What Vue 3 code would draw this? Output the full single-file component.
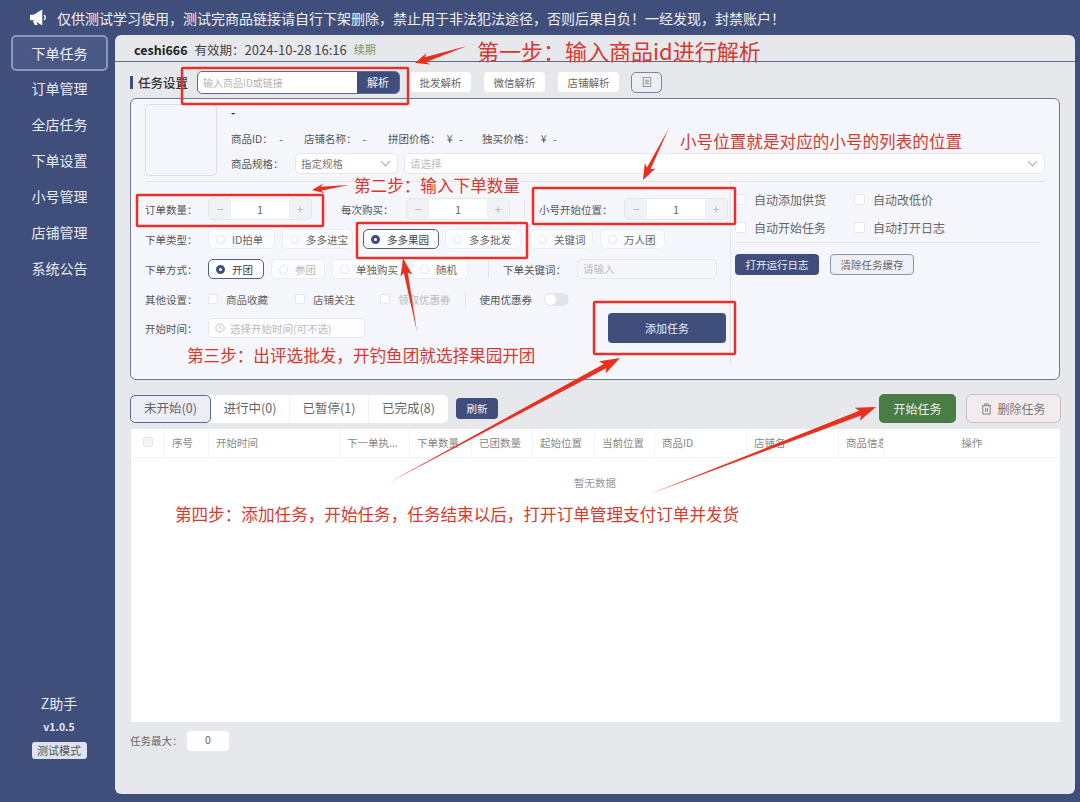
<template>
  <div class="app">
    <div class="banner">
      <svg class="horn" viewBox="0 0 20 18" width="19" height="17">
        <path d="M1 6h4l9-5.500v17l-9-5.500H1z" fill="#fff" />
        <path d="M4 12.500h3.500l1.500 4.500H6z" fill="#fff" />
        <path d="M16 6.500c1.500 1 1.500 4 0 5" fill="none" stroke="#fff" stroke-width="1.500" />
      </svg>
      <span>仅供测试学习使用，测试完商品链接请自行下架删除，禁止用于非法犯法途径，否则后果自负！一经发现，封禁账户！</span>
    </div>

    <div class="body">
      <aside class="sidebar">
        <nav class="menu">
          <div v-for="(item, i) in menu" :key="item" class="menu-item" :class="{ active: i === 0 }">{{ item }}</div>
        </nav>
        <div class="side-foot">
          <div class="app-name">Z助手</div>
          <div class="version">v1.0.5</div>
          <div class="mode">测试模式</div>
        </div>
      </aside>

      <main class="main">
        <header class="userbar">
          <b class="user">ceshi666</b>
          <span>有效期：<span class="expire">2024-10-28 16:16</span></span>
          <span class="renew">续期</span>
        </header>

        <div class="toolbar">
          <div class="section-title">任务设置</div>
          <div class="search">
            <span class="search-input">输入商品ID或链接</span>
            <span class="search-btn">解析</span>
          </div>
          <button v-for="b in parseButtons" :key="b" class="tool-btn">{{ b }}</button>
          <button class="icon-btn">
            <svg viewBox="0 0 12 12" width="10" height="10" fill="none" stroke="#888" stroke-width="1">
              <rect x="1.500" y="0.500" width="9" height="11" />
              <path d="M3.500 4h5M3.500 6h5M3.500 8h5" />
            </svg>
          </button>
        </div>

        <section class="card">
          <div class="product">
            <div class="thumb"></div>
            <div class="product-info">
              <div class="product-name">-</div>
              <div class="product-meta">
                <span class="m1">商品ID： -</span>
                <span class="m2">店铺名称： -</span>
                <span class="m3">拼团价格： ¥ -</span>
                <span>独买价格： ¥ -</span>
              </div>
              <div class="product-spec">
                <span class="spec-label">商品规格：</span>
                <div class="select small">指定规格<i class="chev"></i></div>
                <div class="select wide"><em>请选择</em><i class="chev"></i></div>
              </div>
            </div>
          </div>

          <div class="settings">
            <div class="settings-left">
              <div class="row">
                <template v-for="(s, i) in steppers" :key="s.label">
                  <span v-if="i > 0" class="vline"></span>
                  <span class="label" :class="s.cls">{{ s.label }}</span>
                  <div class="stepper">
                    <span class="step">−</span>
                    <span class="step-value">1</span>
                    <span class="step">+</span>
                  </div>
                </template>
              </div>

              <div class="row">
                <span class="label">下单类型：</span>
                <div class="radios type-radios">
                  <label v-for="r in orderTypes" :key="r" class="radio" :class="{ on: r === '多多果园' }">
                    <i class="dot"></i>{{ r }}
                  </label>
                </div>
              </div>

              <div class="row">
                <span class="label">下单方式：</span>
                <div class="radios way-radios">
                  <label v-for="r in orderWays" :key="r" class="radio" :class="{ on: r === '开团', off: r === '参团' }">
                    <i class="dot"></i>{{ r }}
                  </label>
                </div>
                <span class="vline way-line"></span>
                <span class="label keyword-label">下单关键词：</span>
                <div class="keyword">请输入</div>
              </div>

              <div class="row">
                <span class="label">其他设置：</span>
                <label class="check c1"><i class="box"></i>商品收藏</label>
                <label class="check c2"><i class="box"></i>店铺关注</label>
                <label class="check off"><i class="box"></i>领取优惠券</label>
                <span class="vline coupon-line"></span>
                <span class="coupon-label">使用优惠券</span>
                <i class="switch"></i>
              </div>

              <div class="row last">
                <span class="label">开始时间：</span>
                <div class="time-input">
                  <svg viewBox="0 0 12 12" width="10" height="10" fill="none" stroke="#bbb" stroke-width="1">
                    <circle cx="6" cy="6" r="5" />
                    <path d="M6 3v3l2 1" />
                  </svg>
                  选择开始时间(可不选)
                </div>
                <button class="add-btn">添加任务</button>
              </div>
            </div>

            <div class="settings-right">
              <div class="check-grid">
                <label v-for="c in autoChecks" :key="c" class="check"><i class="box"></i>{{ c }}</label>
              </div>
              <div class="log-btns">
                <button class="log-btn">打开运行日志</button>
                <button class="clear-btn">清除任务缓存</button>
              </div>
            </div>
          </div>
        </section>

        <div class="tasks-bar">
          <div class="tabs">
            <span v-for="(t, i) in tabs" :key="t" class="tab" :class="{ current: i === 0 }">{{ t }}</span>
          </div>
          <button class="refresh">刷新</button>
          <div class="spacer"></div>
          <button class="start">开始任务</button>
          <button class="delete">
            <svg viewBox="0 0 12 13" width="11" height="12" fill="none" stroke="#777" stroke-width="1">
              <path d="M1 3h10M4 3V1h4v2M2 3v9h8V3M5 5.500v4M7 5.500v4" />
            </svg>
            删除任务
          </button>
        </div>

        <div class="table">
          <div class="thead">
            <div class="th"><i class="box head-box"></i></div>
            <div v-for="c in columns" :key="c" class="th">{{ c }}</div>
            <div class="th action">操作</div>
          </div>
          <div class="empty">暂无数据</div>
        </div>

        <div class="table-foot">
          <span class="foot-label">任务最大：</span>
          <span class="max-input">0</span>
        </div>
      </main>
    </div>

    <!-- red notes drawn on top of the screenshot -->
    <svg class="notes" viewBox="0 0 1080 802" width="1080" height="802">
      <rect v-for="b in redBoxes" :key="b.x" :x="b.x" :y="b.y" :width="b.w" :height="b.h" rx="1" fill="none" stroke="#e8302a" stroke-width="2.500" />
      <polygon v-for="a in arrowShapes" :key="a" :points="a" fill="#e8301f" />
      <text v-for="n in redNotes" :key="n.text" :x="n.x" :y="n.y" :font-size="n.size" fill="#d9382e">{{ n.text }}</text>
    </svg>
  </div>
</template>

<script setup>
const menu = ['下单任务', '订单管理', '全店任务', '下单设置', '小号管理', '店铺管理', '系统公告']
const parseButtons = ['批发解析', '微信解析', '店铺解析']
const steppers = [
  { label: '订单数量：', cls: '' },
  { label: '每次购买：', cls: 'mid' },
  { label: '小号开始位置：', cls: 'long' },
]
const orderTypes = ['ID拍单', '多多进宝', '多多果园', '多多批发', '关键词', '万人团']
const orderWays = ['开团', '参团', '单独购买', '随机']
const autoChecks = ['自动添加供货', '自动改低价', '自动开始任务', '自动打开日志']
const tabs = ['未开始(0)', '进行中(0)', '已暂停(1)', '已完成(8)']
const columns = ['序号', '开始时间', '下一单执...', '下单数量', '已团数量', '起始位置', '当前位置', '商品ID', '店铺名', '商品信息']

const redBoxes = [
  { x: 182, y: 68, w: 226, h: 36 },
  { x: 137, y: 195, w: 186, h: 31 },
  { x: 533, y: 188, w: 202, h: 36 },
  { x: 357, y: 223, w: 170, h: 35 },
  { x: 594, y: 302, w: 141, h: 52 },
]

const redNotes = [
  { text: '第一步：输入商品id进行解析', x: 477, y: 60, size: 22 },
  { text: '小号位置就是对应的小号的列表的位置', x: 680, y: 148, size: 16.6 },
  { text: '第二步：输入下单数量', x: 354, y: 192, size: 16.6 },
  { text: '第三步：出评选批发，开钓鱼团就选择果园开团', x: 187, y: 362, size: 16.6 },
  { text: '第四步：添加任务，开始任务，任务结束以后，打开订单管理支付订单并发货', x: 175, y: 521, size: 16.6 },
]

// tail and tip of each arrow, thin at the tail and widening to the head
const arrows = [
  { from: [467, 46], to: [415, 63], neck: 2.5, head: 6, len: 14 },
  { from: [349, 185], to: [312, 190], neck: 2, head: 5, len: 12 },
  { from: [669, 128], to: [643, 180], neck: 2, head: 6, len: 16 },
  { from: [417, 332], to: [403, 258], neck: 2, head: 6, len: 18 },
  { from: [388, 483], to: [620, 358], neck: 2.5, head: 7, len: 20 },
  { from: [650, 494], to: [876, 407], neck: 2.5, head: 7, len: 20 },
]

const arrowShapes = arrows.map(({ from, to, neck, head, len }) => {
  const dx = to[0] - from[0]
  const dy = to[1] - from[1]
  const d = Math.hypot(dx, dy)
  const ux = dx / d
  const uy = dy / d
  const at = (back, side) => {
    const x = to[0] - ux * back - uy * side
    const y = to[1] - uy * back + ux * side
    return `${x.toFixed(1)},${y.toFixed(1)}`
  }
  return [
    `${from[0]},${from[1]}`,
    at(len - 3, neck),
    at(len, head),
    `${to[0]},${to[1]}`,
    at(len, -head),
    at(len - 3, -neck),
  ].join(' ')
})
</script>

<style>
html, body {
  margin: 0;
  background: #404e7c;
}
</style>

<style scoped>
.app {
  position: relative;
  display: flex;
  flex-direction: column;
  width: 1080px;
  height: 802px;
  overflow: hidden;
  background: #404e7c;
  color: #555;
  font-family: "Noto Sans CJK SC", "Noto Sans", sans-serif;
  font-size: 11px;
}

i, em { font-style: normal; }

button {
  font-family: inherit;
  cursor: pointer;
  padding: 0;
}

.banner {
  display: flex;
  align-items: center;
  gap: 9px;
  height: 35px;
  padding-left: 29px;
  color: #eef0f6;
  font-size: 14px;
  flex: none;
}

.body {
  display: flex;
  flex: 1;
  min-height: 0;
}

.sidebar {
  display: flex;
  flex-direction: column;
  justify-content: space-between;
  width: 115px;
  flex: none;
  color: #e8eaf2;
}

.menu-item {
  display: flex;
  align-items: center;
  justify-content: center;
  height: 36px;
  width: 97px;
  margin-left: 11px;
  padding-bottom: 2px;
  box-sizing: border-box;
  font-size: 14px;
}

.menu-item.active {
  border: 2px solid #8b96b8;
  border-radius: 5px;
  background: #4a5885;
  padding-bottom: 0;
  color: #f2f3f8;
}

.side-foot {
  display: flex;
  flex-direction: column;
  align-items: center;
  padding: 0 0 43px 3px;
}

.app-name { font-size: 14px; }

.version {
  margin-top: 6px;
  font-size: 10.500px;
  font-weight: 700;
}

.mode {
  margin-top: 8px;
  width: 55px;
  height: 17px;
  line-height: 16px;
  text-align: center;
  border-radius: 3px;
  background: #dfe3f0;
  color: #555;
  font-size: 11px;
}

.main {
  display: flex;
  flex-direction: column;
  flex: 1;
  min-width: 0;
  margin: 0 5px 8px 0;
  padding: 0 15px;
  border-radius: 6px;
  background: #e7e8ec;
}

.userbar {
  display: flex;
  align-items: center;
  gap: 7px;
  height: 26px;
  margin: 0 -15px;
  padding: 2px 0 0 19px;
  box-sizing: content-box;
  height: 24px;
  border-bottom: 1px solid #5f6a8c;
  color: #444;
  font-size: 12.500px;
  flex: none;
}

.expire { font-size: 13px; }

.user {
  color: #222;
  font-size: 12.500px;
}

.renew {
  color: #6d9a68;
  font-size: 11px;
}

.toolbar {
  display: flex;
  align-items: center;
  height: 32px;
  padding-top: 4px;
  flex: none;
}

.section-title {
  width: 67px;
  padding-left: 5px;
  box-sizing: border-box;
  border-left: 3px solid #404e7c;
  line-height: 13px;
  color: #333;
  font-size: 12.500px;
  font-weight: 500;
  white-space: nowrap;
}

.search {
  display: flex;
  width: 203px;
  height: 23px;
  box-sizing: border-box;
  border: 1px solid #5f6a8c;
  border-radius: 5px;
  overflow: hidden;
  background: #fff;
  margin-right: 10px;
}

.search-input {
  flex: 1;
  padding-left: 5px;
  line-height: 21px;
  color: #b5b5b5;
  font-size: 10px;
}

.search-btn {
  width: 42px;
  line-height: 21px;
  text-align: center;
  background: #404e7c;
  color: #eef0f6;
  font-size: 11px;
}

.tool-btn {
  width: 61px;
  height: 20px;
  margin-right: 13px;
  border: 0;
  border-radius: 4px;
  background: #fff;
  color: #666;
  font-size: 10.500px;
}

.icon-btn {
  display: flex;
  align-items: center;
  justify-content: center;
  width: 31px;
  height: 21px;
  margin-left: -1px;
  border: 1px solid #7a84a2;
  border-radius: 5px;
  background: #eceef5;
}

.card {
  display: flex;
  flex-direction: column;
  height: 282px;
  box-sizing: border-box;
  border: 1px solid #6f7894;
  border-radius: 6px;
  padding: 5px 14px 0;
  background: #f4f6fb;
  flex: none;
}

.product {
  display: flex;
  gap: 14px;
  height: 77px;
  flex: none;
  border-bottom: 1px solid #e3e5ea;
}

.thumb {
  width: 72px;
  height: 72px;
  box-sizing: border-box;
  border: 1px solid #dcdee4;
  border-radius: 5px;
}

.product-info { flex: 1; }

.product-name {
  height: 17px;
  line-height: 17px;
  color: #222;
  font-weight: 700;
}

.product-meta {
  display: flex;
  margin-top: 10px;
  line-height: 16px;
  font-size: 10.500px;
  word-spacing: 4px;
  white-space: nowrap;
}

.m1 { width: 73px; }
.m2 { width: 84px; }
.m3 { width: 94px; }

.product-spec {
  display: flex;
  align-items: center;
  margin-top: 6px;
  font-size: 10.500px;
}

.spec-label { width: 64px; }

.select {
  display: flex;
  align-items: center;
  justify-content: space-between;
  height: 21px;
  padding: 0 8px 0 5px;
  box-sizing: border-box;
  border: 1px solid #e6e7ec;
  border-radius: 5px;
  background: #fff;
  color: #777;
}

.select.small { width: 103px; }

.select.wide {
  width: 641px;
  margin-left: 6px;
}

.select em { color: #bbb; }

.chev {
  width: 6px;
  height: 6px;
  margin-top: -4px;
  border-right: 1px solid #aaa;
  border-bottom: 1px solid #aaa;
  transform: rotate(45deg);
}

.settings {
  display: flex;
  flex: 1;
  min-height: 0;
}

.settings-left {
  display: flex;
  flex-direction: column;
  gap: 8px;
  width: 586px;
  height: 183px;
  box-sizing: border-box;
  padding-top: 16px;
  border-right: 1px solid #e3e5ea;
}

.row {
  display: flex;
  align-items: center;
  height: 22px;
  font-size: 10.500px;
}

.row.last { margin-top: -1px; }

.label {
  width: 63px;
  flex: none;
  color: #555;
}

.label.mid { width: 65px; }
.label.long { width: 85px; }

.vline {
  width: 1px;
  height: 18px;
  margin: 0 14px;
  background: #e3e5ea;
  flex: none;
}

.stepper {
  display: flex;
  width: 104px;
  height: 22px;
  box-sizing: border-box;
  border: 1px solid #e6e7ec;
  border-radius: 5px;
  overflow: hidden;
  background: #f1f2f6;
  flex: none;
}

.step {
  width: 22px;
  line-height: 19px;
  text-align: center;
  color: #b5b5b5;
  font-size: 12px;
}

.step-value {
  flex: 1;
  line-height: 20px;
  text-align: center;
  background: #fff;
  color: #666;
  font-size: 11px;
}

.radios {
  display: flex;
  gap: 7px;
}

.type-radios .radio:nth-child(1) { width: 67px; }
.type-radios .radio:nth-child(2) { width: 71px; margin-right: 3px; }
.type-radios .radio:nth-child(3) { width: 76px; margin-right: -1px; }
.type-radios .radio:nth-child(4) { width: 76px; margin-right: 2px; }
.type-radios .radio:nth-child(5) { width: 63px; }
.type-radios .radio:nth-child(6) { width: 65px; }

.way-radios .radio:nth-child(1) { width: 56px; }
.way-radios .radio:nth-child(2) { width: 54px; }
.way-radios .radio:nth-child(3) { width: 73px; }
.way-radios .radio:nth-child(4) { width: 56px; }

.radio {
  display: flex;
  align-items: center;
  gap: 7px;
  height: 20px;
  padding-left: 7px;
  box-sizing: border-box;
  border: 1px solid #eceef3;
  border-radius: 5px;
  background: #fbfcfe;
  color: #666;
  white-space: nowrap;
}

.radio.on {
  border-color: #555e7c;
  color: #444;
}

.radio.off { color: #bbb; }

.dot {
  width: 9px;
  height: 9px;
  box-sizing: border-box;
  border: 1px solid #e3e4e9;
  border-radius: 50%;
  background: #fff;
  flex: none;
}

.radio.on .dot {
  border: 3px solid #404e7c;
}

.vline.way-line { margin: 0 14px 0 20px; }

.label.keyword-label { width: 74px; }

.keyword {
  width: 140px;
  height: 20px;
  line-height: 18px;
  padding-left: 5px;
  box-sizing: border-box;
  border: 1px solid #e6e7ec;
  border-radius: 5px;
  background: #f5f6f9;
  color: #bbb;
}

.check {
  display: flex;
  align-items: center;
  gap: 8px;
  color: #666;
  white-space: nowrap;
}

.check.off { color: #bbb; }
.c1 { width: 87px; }
.c2 { width: 85px; }

.box {
  width: 10px;
  height: 10px;
  box-sizing: border-box;
  border: 1px solid #e6e7ec;
  border-radius: 2px;
  background: #fff;
  flex: none;
}

.coupon-label {
  width: 64px;
  color: #555;
}

.switch {
  position: relative;
  width: 25px;
  height: 13px;
  border-radius: 7px;
  background: #e3e4e9;
}

.switch::after {
  content: "";
  position: absolute;
  left: 1px;
  top: 1px;
  width: 11px;
  height: 11px;
  border-radius: 50%;
  background: #fff;
}

.time-input {
  display: flex;
  align-items: center;
  gap: 5px;
  width: 157px;
  height: 20px;
  padding-left: 6px;
  box-sizing: border-box;
  border: 1px solid #e9eaef;
  border-radius: 4px;
  background: #fdfdff;
  color: #bbb;
  white-space: nowrap;
}

.add-btn {
  width: 118px;
  height: 30px;
  margin-left: 243px;
  border: 0;
  border-radius: 4px;
  background: #404e7c;
  color: #eef0f6;
  font-size: 11px;
  flex: none;
}

.settings-right {
  flex: 1;
  padding: 4px 5px 0 4px;
  font-size: 11px;
}

.check-grid {
  display: grid;
  grid-template-columns: 119px 1fr;
  row-gap: 10px;
  padding: 4px 0 6px;
  border-bottom: 1px solid #e3e5ea;
}

.check-grid .check {
  height: 18px;
  font-size: 12px;
}

.check-grid .box {
  width: 11px;
  height: 11px;
}

.log-btns {
  display: flex;
  gap: 11px;
  margin-top: 11px;
}

.log-btn {
  width: 84px;
  height: 21px;
  border: 0;
  border-radius: 4px;
  background: #404e7c;
  color: #eef0f6;
  font-size: 10.500px;
}

.clear-btn {
  width: 84px;
  height: 21px;
  border: 1px solid #8e96ae;
  border-radius: 4px;
  background: #eef0f5;
  color: #666;
  font-size: 10.500px;
}

.tasks-bar {
  display: flex;
  align-items: center;
  height: 29px;
  margin-top: 14px;
  flex: none;
}

.tabs {
  display: flex;
  height: 28px;
  border-radius: 5px;
  background: #fff;
}

.tab {
  width: 79px;
  line-height: 26px;
  text-align: center;
  color: #666;
  font-size: 12.500px;
  border-right: 1px solid #f0f1f4;
  box-sizing: border-box;
}

.tab:last-child { border-right: 0; }

.tab.current {
  width: 81px;
  line-height: 24px;
  border: 1px solid #5f6a8c;
  border-radius: 5px;
  background: #eceef5;
}

.refresh {
  width: 42px;
  height: 21px;
  margin-left: 8px;
  border: 0;
  border-radius: 4px;
  background: #404e7c;
  color: #eef0f6;
  font-size: 10.500px;
}

.spacer { flex: 1; }

.start {
  width: 77px;
  height: 29px;
  margin-right: 10px;
  border: 0;
  border-radius: 5px;
  background: #4a7c46;
  color: #eef3ec;
  font-size: 12px;
}

.delete {
  display: flex;
  align-items: center;
  justify-content: center;
  gap: 5px;
  width: 95px;
  height: 29px;
  margin-right: -1px;
  border: 1px solid #cbbfc4;
  border-radius: 6px;
  background: #f3ecee;
  color: #777;
  font-size: 12px;
}

.table {
  display: flex;
  flex-direction: column;
  flex: 1;
  min-height: 0;
  margin: 6px 0 0 1px;
  background: #fff;
}

.thead {
  display: grid;
  grid-template-columns: 34px 44px 131px 70px 62px 61px 62px 60px 92px 92px 45px 1fr;
  height: 28px;
  flex: none;
  border-bottom: 1px solid #f2f3f5;
}

.th {
  display: flex;
  align-items: center;
  padding: 0 0 2px 7px;
  border-right: 1px solid #f3f4f6;
  color: #888;
  font-size: 10.500px;
  white-space: nowrap;
  overflow: hidden;
}

.th.action {
  justify-content: center;
  padding: 0 0 2px;
  border-right: 0;
}

.head-box {
  margin-left: 5px;
  background: #f3f4f6;
}

.empty {
  margin-top: 18px;
  text-align: center;
  color: #999;
  font-size: 10.500px;
  line-height: 14px;
  padding-right: 1px;
}

.table-foot {
  display: flex;
  align-items: center;
  gap: 11px;
  height: 20px;
  margin: 9px 0 43px;
  color: #666;
  font-size: 10.500px;
  flex: none;
}

.foot-label {
  width: 46px;
  padding-bottom: 2px;
  white-space: nowrap;
}

.max-input {
  width: 42px;
  height: 20px;
  line-height: 18px;
  text-align: center;
  border-radius: 4px;
  background: #fff;
  color: #666;
}

.notes {
  position: absolute;
  left: 0;
  top: 0;
  pointer-events: none;
}

.notes text {
  font-family: "Noto Sans CJK SC", sans-serif;
}
</style>
